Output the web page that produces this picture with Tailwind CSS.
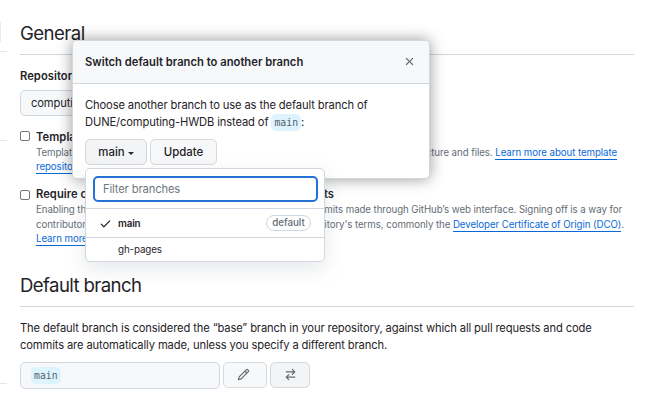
<!DOCTYPE html>
<html lang="en">
<head>
<meta charset="utf-8">
<title>Repository settings</title>
<script src="https://cdn.jsdelivr.net/npm/@tailwindcss/browser@4"></script>
</head>
<body class="relative w-[664px] h-[409px] overflow-hidden bg-white text-[#1f2328] font-[Inter,sans-serif] text-[11.2px] leading-[17px] tracking-[-0.13px] whitespace-nowrap">
<div class="flex h-full">
  <aside class="w-[7px] shrink-0 flex flex-col">
    <div class="mt-[22px] h-[20px] w-px bg-[#eaecef]"></div>
    <div class="mt-[9px] h-px bg-[#e4e7ea]"></div>
    <div class="mt-[88px] h-px bg-[#e4e7ea]"></div>
    <div class="mt-[242px] h-px bg-[#e4e7ea]"></div>
  </aside>
  <main class="ml-[13px] w-[614px] flex flex-col">
    <h1 class="mt-[20px] h-[35px] border-b border-[#d0d7de] text-[18.6px] leading-[27px] tracking-[-0.55px]"><span>General</span></h1>
    <label class="mt-[13px] font-semibold h-[17px] tracking-[0.05px]">Repository name</label>
    <div class="mt-[5px] w-[200px] h-[26px] rounded-[5px] border border-[#d0d7de] bg-[#f6f8fa] pl-[10px] leading-[24px]">computing-HWDB</div>
    <section class="mt-[12px] h-[46px] flex text-[9.7px] leading-[14.5px] tracking-[-0.07px] text-[#656d76]">
      <div class="mt-[3px] mr-[6px] size-[10px] rounded-[2px] border border-[#767676] bg-white"></div>
      <div>
        <h3 class="h-[18px] text-[11.2px] leading-[18px] tracking-[0.05px] font-semibold text-[#1f2328]">Template repository</h3>
        <div class="flex justify-between w-[581px] h-[14px]"><span>Templates let users</span><span><span>generate directory structure and files. </span><a class="inline-block h-[14px] border-b border-[#0969da] text-[#0969da]">Learn more about template</a></span></div>
        <div class="h-[14px]"><a class="inline-block h-[14px] border-b border-[#0969da] text-[#0969da]">repositories</a>.</div>
      </div>
    </section>
    <section class="mt-[12px] h-[60px] flex text-[9.7px] leading-[14.5px] tracking-[-0.07px] text-[#656d76]">
      <div class="mt-[4px] mr-[6px] size-[10px] rounded-[2px] border border-[#767676] bg-white"></div>
      <div>
        <h3 class="text-[11.2px] leading-[17px] tracking-[0.05px] font-semibold text-[#1f2328] flex justify-between w-[298px]"><span>Require contributors</span><span>commits</span></h3>
        <div class="flex justify-between w-[586px] h-[14.5px]"><span>Enabling this setting</span><span>commits made through GitHub’s web interface. Signing off is a way for</span></div>
        <div class="flex justify-between w-[588px] h-[14.5px]"><span>contributors to affirm</span><span>repository's terms, commonly the <a class="inline-block h-[14px] border-b border-[#0969da] text-[#0969da]">Developer Certificate of Origin (DCO)</a>.</span></div>
        <div class="h-[14.5px]"><a class="inline-block h-[14px] border-b border-[#0969da] text-[#0969da]">Learn more</a></div>
      </div>
    </section>
    <h2 class="mt-[26px] h-[35px] border-b border-[#d0d7de] text-[18.6px] leading-[27px] tracking-[-0.6px]"><span>Default branch</span></h2>
    <p class="mt-[13px] h-[34px]"><span>The default branch is considered the “base” branch in your repository, against which all pull requests and code</span><br><span>commits are automatically made, unless you specify a different branch.</span></p>
    <div class="mt-[8px] flex items-start">
      <div class="flex items-center w-[200px] h-[27px] rounded-[5px] border border-[#d0d7de] bg-[#f6f8fa] pl-[10px]"><code class="h-[17px] rounded-[5px] bg-[#ddf4ff] px-[3px] text-[#57606a] font-['DejaVu_Sans_Mono',monospace] text-[9.8px] leading-[17px] tracking-normal">main</code></div>
      <button class="ml-[3px] w-[44px] h-[26px] rounded-[5px] border border-[#d8dbde] bg-[#f6f8fa] flex items-center pl-[13px] text-[#656d76]"><svg class="size-[13px] mb-[2px]" viewBox="0 0 16 16" fill="currentColor"><path d="M11.013 1.427a1.75 1.75 0 0 1 2.474 0l1.086 1.086a1.75 1.75 0 0 1 0 2.474l-8.61 8.61c-.21.21-.47.364-.756.445l-3.251.93a.75.75 0 0 1-.927-.928l.929-3.25c.081-.286.235-.547.445-.758l8.61-8.61Zm.176 4.823L9.75 4.81l-6.286 6.287a.253.253 0 0 0-.064.108l-.558 1.953 1.953-.558a.253.253 0 0 0 .108-.064Zm1.238-3.763a.25.25 0 0 0-.354 0L10.811 3.75l1.439 1.44 1.263-1.263a.25.25 0 0 0 0-.354Z"/></svg></button>
      <button class="ml-[3px] w-[40px] h-[26px] rounded-[5px] border border-[#d5d8db] bg-[#f3f4f6] grid place-items-center text-[#656d76]"><svg class="size-[13px] mb-[2px]" viewBox="0 0 16 16" fill="currentColor"><path d="M5.22 14.78a.75.75 0 0 0 1.06-1.06L4.56 12h8.69a.75.75 0 0 0 0-1.5H4.56l1.72-1.72a.75.75 0 0 0-1.06-1.06l-3 3a.75.75 0 0 0 0 1.06l3 3Zm5.56-6.5a.75.75 0 1 1-1.06-1.06l1.72-1.72H2.75a.75.75 0 0 1 0-1.5h8.69L9.72 2.28a.75.75 0 0 1 1.06-1.06l3 3a.75.75 0 0 1 0 1.06l-3 3Z"/></svg></button>
    </div>
  </main>
</div>

<div class="absolute left-[72px] top-[40px] w-[358px] h-[139px] rounded-[5px] border border-[#d0d7de] bg-white shadow-[0_0_15px_rgba(0,0,0,0.4)] flex flex-col">
  <header class="h-[43px] rounded-t-[4px] border-b border-[#d0d7de] bg-[#f6f8fa] flex items-center justify-between pl-[12px] pr-[13px] font-semibold tracking-[0.02px]"><span>Switch default branch to another branch</span><svg class="size-[13px] mb-[2px] text-[#656d76]" viewBox="0 0 16 16" fill="currentColor"><path d="M3.72 3.72a.75.75 0 0 1 1.06 0L8 6.94l3.22-3.22a.75.75 0 1 1 1.06 1.06L9.06 8l3.22 3.22a.75.75 0 1 1-1.06 1.06L8 9.06l-3.22 3.22a.75.75 0 0 1-1.06-1.06L6.94 8 3.72 4.78a.75.75 0 0 1 0-1.06Z"/></svg></header>
  <p class="mt-[13px] ml-[12px] h-[34px]"><span>Choose another branch to use as the default branch of</span><br><span>DUNE/computing-HWDB instead of </span><code class="inline-block h-[17px] rounded-[5px] bg-[#ddf4ff] px-[3px] text-[#57606a] font-['DejaVu_Sans_Mono',monospace] text-[9.8px] leading-[17px] tracking-normal align-top">main</code>:</p>
  <div class="mt-[8px] ml-[12px] flex gap-[3px] font-medium text-[11.4px] tracking-normal">
    <button class="w-[62px] h-[26px] rounded-[5px] border border-[#d5d8db] bg-[#f3f4f6] flex items-center justify-center gap-[3px]">main<i class="mt-[2px] border-x-[3px] border-x-transparent border-t-[3px] border-t-[#24292f]"></i></button>
    <button class="w-[67px] h-[26px] rounded-[5px] border border-[#d8dbde] bg-[#f6f8fa]">Update</button>
  </div>
</div>

<div class="absolute left-[85px] top-[168px] w-[240px] h-[94px] rounded-[5px] border border-[#d0d7de] bg-white shadow-[0_7px_20px_rgba(140,149,159,0.22)] flex flex-col text-[9.8px]">
  <div class="h-[40px] border-b border-[#d0d7de] pl-[7px] pt-[7px]"><div class="w-[225px] h-[26px] rounded-[5px] border-2 border-[#2472d6] pl-[8px] text-[11.2px] leading-[22px] text-[#6e7781]">Filter branches</div></div>
  <div class="h-[29px] border-b border-[#d0d7de] flex items-center pl-[13px] pr-[13px] font-semibold"><svg class="size-[13px] mr-[6px]" viewBox="0 0 16 16" fill="currentColor"><path d="M13.78 4.22a.75.75 0 0 1 0 1.06l-7.25 7.25a.75.75 0 0 1-1.06 0L2.22 9.28a.751.751 0 0 1 1.06-1.06L6 10.94l6.72-6.72a.75.75 0 0 1 1.06 0Z"/></svg><span>main</span><span class="ml-auto h-[16px] w-[45px] rounded-full border border-[#d0d7de] text-center font-medium leading-[14px] tracking-[-0.05px] text-[#656d76]">default</span></div>
  <div class="h-[23px] pl-[32px] leading-[23px]">gh-pages</div>
</div>
</body>
</html>
